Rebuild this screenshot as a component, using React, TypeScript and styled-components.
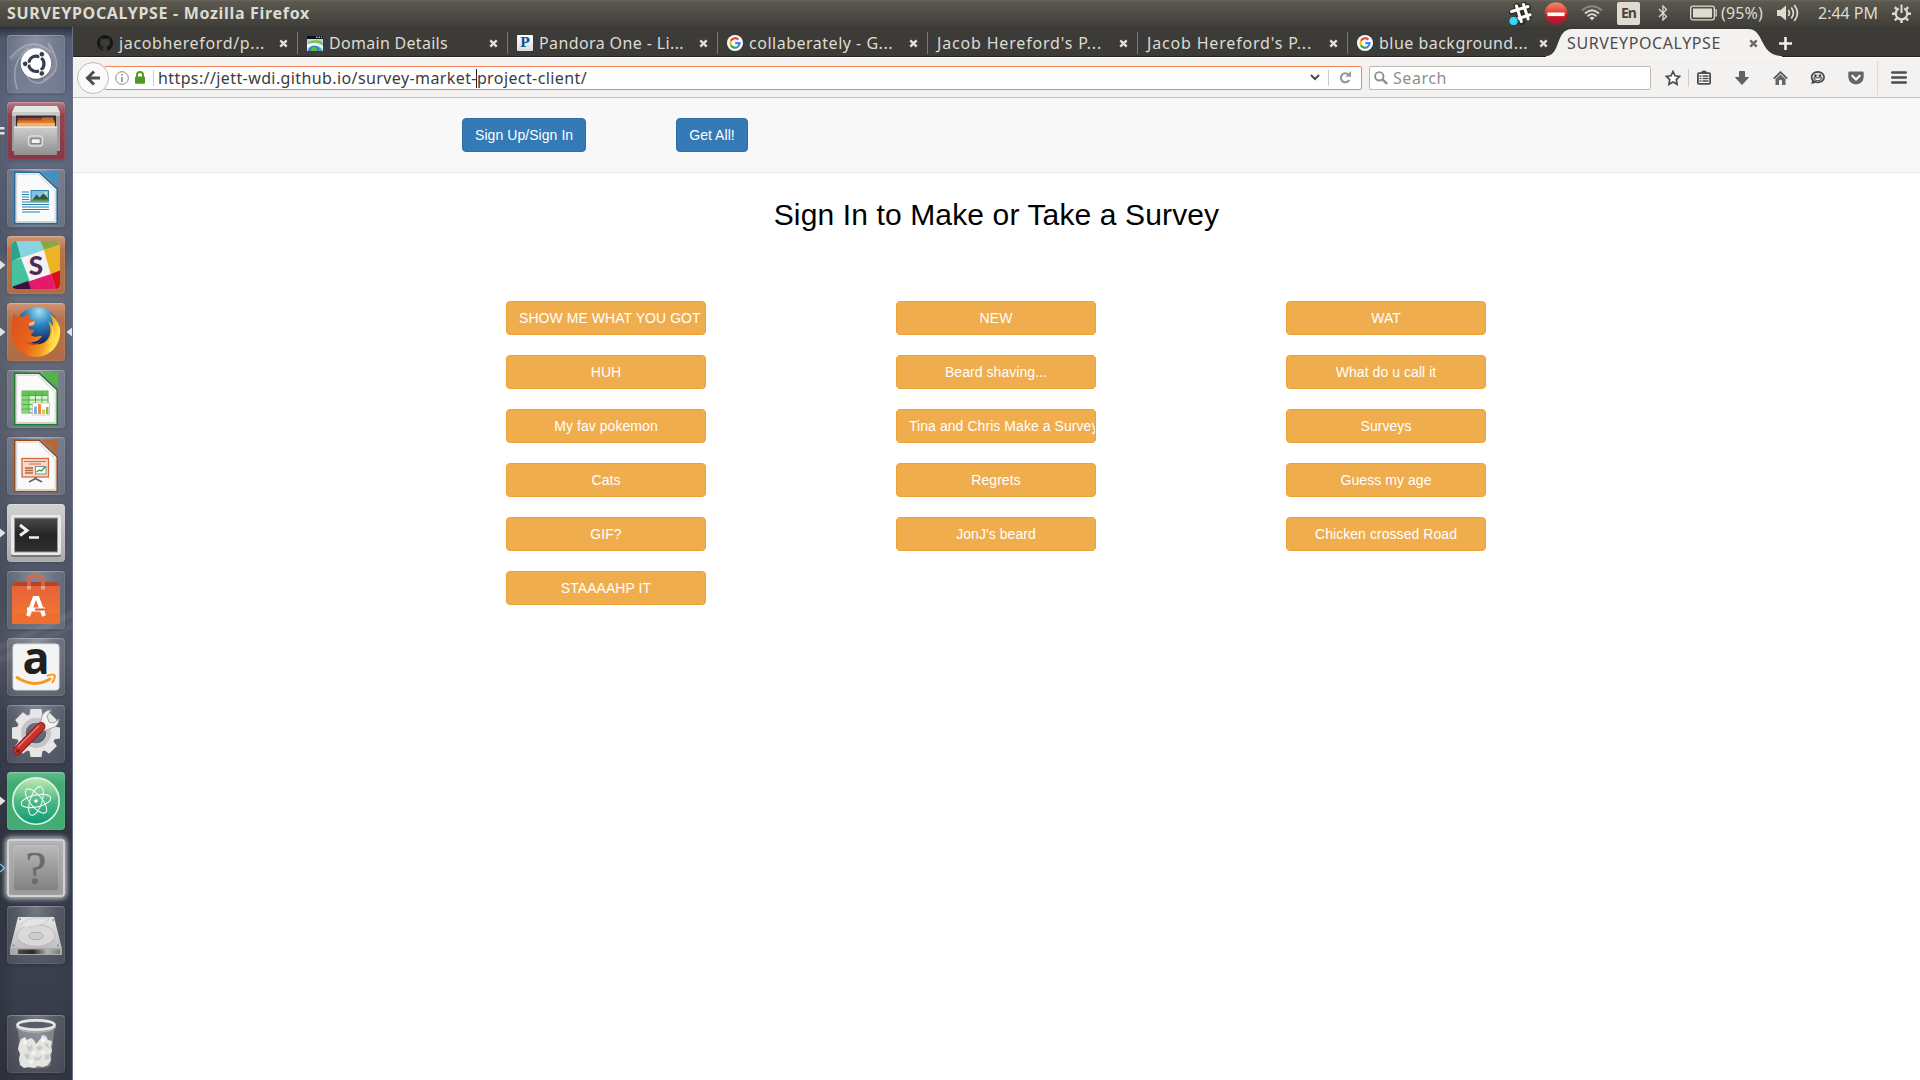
import React, { useLayoutEffect, useRef, useState } from "react";
import styled, { createGlobalStyle } from "styled-components";

const uiFont = '"Noto Sans", "Open Sans", sans-serif';
const pageFont = '"Liberation Sans", Arial, sans-serif';

const GlobalStyle = createGlobalStyle`
  *, *::before, *::after { box-sizing: border-box; }
  body { margin: 0; overflow: hidden; background: #fff; }
  button { font: inherit; margin: 0; }
  svg { display: block; flex: none; }
`;

const Desktop = styled.div`
  width: 1920px;
  height: 1080px;
  display: flex;
  flex-direction: column;
  overflow: hidden;
  background: #fff;
  font-family: ${uiFont};
`;

/* ---------- text that keeps to a given width ---------- */

const Label = styled.span<{ $size: number; $color: string; $bold?: boolean }>`
  flex: none;
  display: block;
  white-space: pre;
  line-height: 20px;
  font-size: ${(p) => p.$size}px;
  font-weight: ${(p) => (p.$bold ? 700 : 400)};
  color: ${(p) => p.$color};
`;

type FittedProps = { text: string; width: number; size?: number; color: string; bold?: boolean };

function Fitted({ text, width, size = 16, color, bold }: FittedProps) {
  const ref = useRef<HTMLSpanElement>(null);
  const [spacing, setSpacing] = useState(0);
  useLayoutEffect(() => {
    const el = ref.current;
    if (!el) return;
    const range = document.createRange();
    range.selectNodeContents(el);
    setSpacing((width - range.getBoundingClientRect().width) / text.length);
  }, [text, width]);
  return (
    <Label ref={ref} $size={size} $color={color} $bold={bold} style={{ letterSpacing: spacing, width }}>
      {text}
    </Label>
  );
}

/* ---------- top panel ---------- */

const Panel = styled.header`
  height: 27px;
  flex: none;
  display: flex;
  align-items: center;
  justify-content: space-between;
  padding: 0 9px 1px 7px;
  background: linear-gradient(#69675a 0, #5a584e 2px, #3f3e39 100%);
`;

const Tray = styled.div`
  display: flex;
  align-items: center;
  height: 100%;
`;

const TrayItem = styled.div<{ $w: number; $gap?: number }>`
  width: ${(p) => p.$w}px;
  margin-left: ${(p) => p.$gap ?? 0}px;
  display: flex;
  justify-content: center;
  align-items: center;
`;

const LanguageBadge = styled.div`
  width: 23px;
  height: 23px;
  border-radius: 2px;
  background: #dfdbd2;
  display: flex;
  align-items: center;
  justify-content: center;
`;

const tray = "#dfdbd2";

function SlackTrayIcon() {
  return (
    <svg width="24" height="25" viewBox="0 0 24 25">
      <g stroke="#262622" strokeWidth="6.400" strokeLinecap="round">
        <path d="M9 5l5 16M16 4l4 13M4 11l16-5M7 18l14-4.500" opacity=".75" />
      </g>
      <g stroke="#fff" strokeWidth="3" strokeLinecap="round">
        <path d="M8.500 5l4.800 15.500M15.500 3.500l4.600 14.500M3.500 10.500L20 5.500M7 18.500l15-4.700" />
      </g>
      <circle cx="5.500" cy="20" r="4.700" fill="#3ed2f3" stroke="#263b40" />
    </svg>
  );
}

function StopIcon() {
  return (
    <svg width="24" height="24" viewBox="0 0 24 24">
      <defs>
        <linearGradient id="stop" x1="0" y1="0" x2="0" y2="1">
          <stop offset="0" stopColor="#f28a74" />
          <stop offset=".5" stopColor="#df3a2b" />
          <stop offset=".55" stopColor="#cf1f22" />
          <stop offset="1" stopColor="#a3153a" />
        </linearGradient>
      </defs>
      <circle cx="12" cy="12.500" r="11.300" fill="url(#stop)" />
      <rect x="3.500" y="11.500" width="17" height="3.600" fill="#fff" />
    </svg>
  );
}

function WifiIcon() {
  return (
    <svg width="22" height="16" viewBox="0 0 22 16" fill="none" strokeWidth="1.800">
      <path d="M1 5.500Q11-3 21 5.500" stroke="#8d8a81" />
      <path d="M4 8.500Q11 2 18 8.500" stroke={tray} />
      <path d="M6.500 11.300Q11 7 15.500 11.300" stroke={tray} />
      <path d="M8.500 12.800Q11 10.800 13.500 12.800L11 15.500z" fill={tray} stroke="none" />
    </svg>
  );
}

function BluetoothIcon() {
  return (
    <svg width="10" height="18" viewBox="0 0 10 18" fill="none" stroke={tray} strokeWidth="1.300">
      <path d="M1 5l7.500 7.500L5 16V2l3.500 3.500L1 13" />
    </svg>
  );
}

function BatteryIcon() {
  return (
    <svg width="27" height="16" viewBox="0 0 27 16">
      <rect x=".7" y="1.200" width="23.600" height="13.600" rx="2" fill="none" stroke={tray} strokeWidth="1.300" />
      <rect x="3" y="3.500" width="19" height="9" fill={tray} />
      <path d="M24.500 5h1.700v6h-1.700" fill="none" stroke={tray} strokeWidth="1.200" />
    </svg>
  );
}

function SpeakerIcon() {
  return (
    <svg width="22" height="18" viewBox="0 0 22 18">
      <path d="M0 6h3.500L9 1.500v15L3.500 12H0z" fill={tray} />
      <g fill="none" stroke={tray} strokeWidth="1.700">
        <path d="M11.300 6q2.200 3 0 6M14.300 3.500q4.200 5.500 0 11M17.300 1q6.300 8 0 16" />
      </g>
    </svg>
  );
}

function SessionIcon() {
  return (
    <svg width="19" height="19" viewBox="0 0 19 19" fill="none" stroke={tray}>
      <path d="M6.700 4.500a5.800 5.800 0 1 0 5.600 0" strokeWidth="2.200" />
      <path d="M9.500 .5v8.500" strokeWidth="2" />
      <path
        d="M0 9.800h3.500M15.500 9.800h3.500M9.500 15.500v3.500M2.800 3.200l2.300 2.300M16.200 3.200l-2.300 2.300M2.800 16.500l2.300-2.300M16.200 16.500l-2.300-2.300"
        strokeWidth="2.400"
      />
    </svg>
  );
}

/* ---------- launcher ---------- */

const Workspace = styled.div`
  flex: 1;
  min-height: 0;
  display: flex;
`;

const Launcher = styled.nav`
  width: 73px;
  flex: none;
  display: flex;
  flex-direction: column;
  align-items: flex-start;
  gap: 9px;
  padding: 8px 0 7px 7px;
  border-right: 1px solid #687087;
  background:
    linear-gradient(#20232ecc 0, #20232e00 12px),
    linear-gradient(155deg, #0000 56%, #ffffff16 58%, #0000 60%, #ffffff10 62%, #0000 64%) 0 450px / 73px 260px no-repeat,
    linear-gradient(90deg, #00000022, #0000 25%, #0000 80%, #00000010),
    linear-gradient(#59627a 0, #667087 8%, #5a6175 21%, #696f7c 23%, #62687a 40%, #515769 53%, #5a5f6d 60%, #414757 66%, #343947 78%, #3a404e 90%, #343845 100%);
`;

type TileKind = "glass" | "red" | "orange" | "silver" | "green" | "unknown";

const tileFill: Record<TileKind, string> = {
  glass: "radial-gradient(ellipse at 50% 0, #ffffff50, #ffffff26 50%, #ffffff18)",
  red: "linear-gradient(#b87983 0, #96404f 22%, #883847)",
  orange: "linear-gradient(#cf9676 0, #b9734a 25%, #b06c45)",
  silver: "linear-gradient(#d2d2d2, #a9a9a9)",
  green: "linear-gradient(#63bd8d 0, #43aa73 20%, #42ad73)",
  unknown: "linear-gradient(#b5b5b5, #9b9b9b)",
};

const Tile = styled.div<{ $kind: TileKind; $last?: boolean }>`
  position: relative;
  width: 58px;
  height: 58px;
  flex: none;
  border-radius: 4px;
  margin-top: ${(p) => (p.$last ? "auto" : "0")};
  background: ${(p) => tileFill[p.$kind]};
  box-shadow: ${(p) =>
    p.$kind === "unknown"
      ? "inset 0 0 0 2px #d2d2d2, 0 0 5px 2px #ffffffaa"
      : "inset 0 0 0 1px #ffffff12, inset 0 1px 1px #ffffff38, 0 1px 5px #00000030"};
`;

const Pip = styled.svg<{ $right?: boolean }>`
  position: absolute;
  top: 22px;
  ${(p) => (p.$right ? "right: -7px;" : "left: -7px;")}
`;

function UbuntuGlyph() {
  return (
    <svg width="58" height="58" viewBox="0 0 58 58">
      <g fill="none" stroke="#fff" opacity=".3">
        <path d="M3 23Q24-2 45 18M41 8Q60 36 37 45M49 35Q30 60 17 37M10 54Q2 27 22 13" strokeWidth="1.500" />
        <path d="M3 25Q26 2 45 20M42 10Q55 36 35 43" strokeWidth="5" opacity=".35" />
      </g>
      <circle cx="29" cy="29.500" r="15.500" fill="#0003" />
      <circle cx="29" cy="28.500" r="15.200" fill="#fff" />
      <circle cx="29.300" cy="28.800" r="7.700" fill="none" stroke="#363e50" strokeWidth="3.200" strokeDasharray="14.120 2" strokeDashoffset="7" />
      <g fill="#363e50" stroke="#fff" strokeWidth="1">
        <circle cx="18.200" cy="28.800" r="2.800" />
        <circle cx="34.800" cy="19.200" r="2.800" />
        <circle cx="34.800" cy="38.400" r="2.800" />
      </g>
    </svg>
  );
}

function FilesGlyph() {
  return (
    <svg width="58" height="58" viewBox="0 0 58 58">
      <defs>
        <linearGradient id="cab" x1="0" y1="0" x2="0" y2="1">
          <stop offset="0" stopColor="#cfcfcf" />
          <stop offset="1" stopColor="#8f8f8f" />
        </linearGradient>
      </defs>
      <path d="M8 4h42l3 6v39H5V10z" fill="#9d9d9d" />
      <path d="M8 4h42l3 6.500H5z" fill="#e6e6e6" />
      <path d="M5 10h48v4H5z" fill="#c9c9c9" />
      <path d="M9 13.500h40V26H9z" fill="#35302f" />
      <path d="M11 16h36v9H11z" fill="#a8452a" />
      <path d="M35 15.500h11V19H35z" fill="#c96a2c" />
      <path d="M10.500 18.500h37V25h-37z" fill="#d97a33" />
      <path d="M10 21h38v4H10z" fill="#f0b268" />
      <path d="M7 24.500h43V53H7z" fill="url(#cab)" />
      <path d="M7 24.500h43V26H7z" fill="#e9e9e9" />
      <rect x="21.500" y="34" width="14" height="10" rx="3" fill="#a8a8a8" stroke="#dedede" strokeWidth="1.300" />
      <rect x="24.200" y="36.800" width="9" height="4.800" fill="#f4f4f4" stroke="#777" strokeWidth=".9" />
    </svg>
  );
}

function DocSheet({ line, fold, children }: { line: string; fold: string; children: React.ReactNode }) {
  return (
    <svg width="58" height="58" viewBox="0 0 58 58">
      <path d="M34 2.500h17V17z" fill={fold} />
      <path d="M7.700 3.200h24.500L50.200 20v34.500H7.700z" fill="#f6f6f6" stroke={line} strokeWidth="1.600" />
      <path d="M9.700 5.200h21L48.200 22v30.500H9.700z" fill="#fafafa" stroke="#d2d2d2" strokeWidth="1" />
      {children}
    </svg>
  );
}

function WriterGlyph() {
  return (
    <DocSheet line="#1a6d9f" fold="#3b92c6">
      <g stroke="#2681b4" strokeWidth="1.200">
        <path d="M15 23h7M15 25.500h7M15 28h7M15 30.500h7M15 33h27M15 35.500h27M15 38h27M15 40.500h27M15 43h18" />
      </g>
      <rect x="24" y="21.500" width="17.500" height="10.500" fill="#7fc4e8" stroke="#1a6d9f" strokeWidth=".8" />
      <path d="M25 31.500l4.500-6 3 3 4-4 4.700 5v2z" fill="#3d5238" />
      <circle cx="38.500" cy="24" r="1.200" fill="#ffe88a" />
      <path d="M25 30.500h16v1.200H25z" fill="#6aa33a" />
    </DocSheet>
  );
}

function CalcGlyph() {
  return (
    <DocSheet line="#188020" fold="#4cb93f">
      <rect x="15" y="21" width="26" height="22" fill="#d8f3cd" stroke="#4faf46" />
      <path d="M15 21h26v4.500H15z" fill="#63c356" />
      <path d="M15 25.500h7V43h-7z" fill="#8ed580" />
      <path d="M15 25.500h26M15 30h26M15 34.500h26M15 39h26M22 21v22M28.500 21v22M35 21v22" stroke="#4faf46" fill="none" />
      <rect x="25.500" y="33" width="17" height="12" fill="#fff" stroke="#bbb" strokeWidth=".7" />
      <path d="M27 36.500h3V44h-3z" fill="#7db4dd" />
      <path d="M31 34h3v10h-3z" fill="#f08a5c" />
      <path d="M35 39.500h3V44h-3z" fill="#f0c437" />
      <path d="M39 37h2.500v7H39z" fill="#7cc142" />
    </DocSheet>
  );
}

function ImpressGlyph() {
  return (
    <DocSheet line="#984a1a" fold="#b86636">
      <rect x="15" y="21.500" width="26.500" height="18.500" fill="#fbd9c6" stroke="#cf6b3f" strokeWidth="1.300" />
      <path d="M17 24.500h22M22 27h12" stroke="#cf6b3f" strokeWidth="1.200" />
      <path d="M18 31h8M18 33.500h8M18 36h8" stroke="#a86b4b" strokeWidth="1.400" />
      <rect x="28.500" y="29.500" width="10.500" height="7.500" fill="#fff" stroke="#888" />
      <path d="M29.500 35l3-2 2 1 3.500-4" stroke="#2a9b3c" fill="none" strokeWidth="1.300" />
      <path d="M28.500 40v2M22 45l6.500-3.500L35 45" stroke="#666" strokeWidth="1.800" fill="none" />
    </DocSheet>
  );
}

const SlackLetter = styled.span`
  position: absolute;
  left: 0;
  right: 0;
  top: 11px;
  text-align: center;
  font: 900 26px/36px Lato, ${uiFont};
  color: #4f2c55;
`;

function SlackGlyph() {
  return (
    <>
      <svg width="58" height="58" viewBox="0 0 58 58">
        <defs>
          <clipPath id="sl">
            <rect x="5" y="5" width="48" height="48" rx="4" />
          </clipPath>
        </defs>
        <g clipPath="url(#sl)">
          <path d="M0 0h58v58H0z" fill="#f3f1f2" />
          <path d="M0 0h11l5 20L4 26z" fill="#2aa58c" />
          <path d="M9 4h25l3 10-23 8z" fill="#87d4e0" />
          <path d="M33 4h20v5L37 14z" fill="#8aa745" />
          <path d="M37 14l17-6v27l-10 4z" fill="#ebb424" />
          <path d="M5 25l9-3 9 24-18 6z" fill="#45c39f" />
          <path d="M20 46l24-8 5 16H22z" fill="#e6186d" />
          <path d="M44 38l10-4v20h-5z" fill="#d4121a" />
          <path d="M4 51l17-6 3 9H4z" fill="#40103d" />
        </g>
      </svg>
      <SlackLetter>S</SlackLetter>
    </>
  );
}

function FirefoxGlyph() {
  return (
    <svg width="58" height="58" viewBox="0 0 58 58">
      <defs>
        <radialGradient id="globe" cx=".55" cy=".1" r=".9">
          <stop offset="0" stopColor="#9fe0f2" />
          <stop offset=".35" stopColor="#2e86c2" />
          <stop offset=".8" stopColor="#12285e" />
        </radialGradient>
        <linearGradient id="fox" x1="0" y1="0" x2="1" y2=".3">
          <stop offset="0" stopColor="#dd4f1e" />
          <stop offset=".5" stopColor="#e8641c" />
          <stop offset=".8" stopColor="#f39a1f" />
          <stop offset="1" stopColor="#ffe04a" />
        </linearGradient>
      </defs>
      <circle cx="30" cy="25.500" r="21.500" fill="url(#globe)" />
      <path
        d="M7 9c0 3 1 4 3 5 2-1 5-1 7 0 3-3 5-4 8-4-3 2-4 4-3 6l6 2c0 2-2 3-5 4-2 1-1 3-1 4 2 1 4 0 5 2-1 2-3 2-3 4 3 3 7 1 11 1-3 5-8 7-12 6 6 4 15 3 19-5 3-6 1-12-1-16 3 1 4 4 5 5 0-6-2-10-5-13 8 4 12 11 12 20 0 13-11 24-24 24S4.500 43 4.500 30c0-8 1-15 2.500-21z"
        fill="url(#fox)"
      />
      <path d="M48 15c7 12 4 28-8 34 12-4 15-21 8-34M44 22c3 8 1 16-5 20 8-3 10-12 5-20M50 19q4 9 1 18 5-9-1-18" fill="#ffe34f" />
      <path d="M22 20l6-2-1 4-5 1z" fill="#f6b59a" />
      <path d="M18 37c4 5 12 5 17 0-4 6-13 7-17 0z" fill="#c53a17" />
    </svg>
  );
}

function TerminalGlyph() {
  return (
    <svg width="58" height="58" viewBox="0 0 58 58">
      <defs>
        <linearGradient id="scr" x1="0" y1="0" x2="0" y2="1">
          <stop offset="0" stopColor="#4a4a4a" />
          <stop offset=".5" stopColor="#252525" />
          <stop offset="1" stopColor="#2e2e2e" />
        </linearGradient>
      </defs>
      <rect x="4" y="12" width="50" height="41" rx="2" fill="#777" />
      <rect x="4" y="11" width="50" height="40" rx="2" fill="#e9e9e9" />
      <rect x="7.500" y="14" width="43" height="34" fill="url(#scr)" stroke="#999" />
      <path d="M13 21l7 5.500L13 31.500" fill="none" stroke="#f0f0f0" strokeWidth="3" />
      <path d="M22 33.500h10" stroke="#f0f0f0" strokeWidth="2.500" />
    </svg>
  );
}

function SoftwareGlyph() {
  return (
    <svg width="58" height="58" viewBox="0 0 58 58">
      <defs>
        <linearGradient id="bag" x1="0" y1="0" x2="0" y2="1">
          <stop offset="0" stopColor="#e5633a" />
          <stop offset="1" stopColor="#f37a34" />
        </linearGradient>
      </defs>
      <path d="M8 11h42l3 6H5z" fill="#b64527" />
      <path d="M5 15h48v38H5z" fill="url(#bag)" />
      <path d="M5 43h48v10H5z" fill="#e9662a" opacity=".5" />
      <path d="M22 18V8q0-3 3-3h8q3 0 3 3v10" fill="none" stroke="#d56a4b" strokeWidth="3" />
      <path d="M20 15h4v3.500h-4zM34 15h4v3.500h-4z" fill="#efa388" />
      <path d="M21 45l6.500-18h3L37 45M20 38.500h18" fill="none" stroke="#fff" strokeWidth="4" />
      <path d="M28 37.500h10v2H28z" fill="#e25523" />
    </svg>
  );
}

const AmazonLetter = styled.span`
  position: absolute;
  left: 0;
  right: 0;
  top: -3px;
  text-align: center;
  font: 700 45px/44px "Open Sans", ${uiFont};
  color: #202020;
`;

function AmazonGlyph() {
  return (
    <>
      <svg width="58" height="58" viewBox="0 0 58 58">
        <rect x="6" y="6" width="46" height="46" rx="3" fill="#f5f5f5" stroke="#ddd" />
        <path d="M10 39.500q17 11 33 1.500" fill="none" stroke="#f7991c" strokeWidth="3" strokeLinecap="round" />
        <path d="M40 38q7-3 8 0 0 3-3 7" fill="none" stroke="#f7991c" strokeWidth="2" />
      </svg>
      <AmazonLetter>a</AmazonLetter>
    </>
  );
}

function SettingsGlyph() {
  const teeth = [0, 45, 90, 135, 180, 225, 270, 315];
  return (
    <svg width="58" height="58" viewBox="0 0 58 58">
      <g fill="#e6e6e6">
        {teeth.map((a) => (
          <path key={a} d="M23.500 4h11l1.500 10H22z" transform={`rotate(${a} 29 28)`} />
        ))}
      </g>
      <circle cx="29" cy="28" r="15" fill="none" stroke="#e6e6e6" strokeWidth="9" />
      <circle cx="29" cy="28" r="13" fill="none" stroke="#c4c4c4" strokeWidth="4" />
      <path d="M33 22l2-11q3-6 9-6l-4 6 2 6 5 1 5-4q-1 8-7 9l-8 3z" fill="#f2f2f2" stroke="#a2a2a2" />
      <path d="M10.500 45.500L34 21.500" stroke="#8f1a1a" strokeWidth="9" strokeLinecap="round" />
      <path d="M10.500 45.500L34 21.500" stroke="#c8322e" strokeWidth="7" strokeLinecap="round" />
      <path d="M11 42l21-21.500" stroke="#ea7a72" strokeWidth="1.500" />
      <circle cx="11" cy="46" r="2" fill="#8c1717" />
    </svg>
  );
}

function AtomGlyph() {
  return (
    <svg width="58" height="58" viewBox="0 0 58 58">
      <defs>
        <linearGradient id="atom" x1="0" y1="0" x2="0" y2="1">
          <stop offset="0" stopColor="#c3ecb0" />
          <stop offset=".5" stopColor="#4fb887" />
          <stop offset="1" stopColor="#0a9c74" />
        </linearGradient>
      </defs>
      <circle cx="29" cy="29" r="23.200" fill="url(#atom)" stroke="#e3f4ea" strokeWidth="1.600" />
      <g fill="none" stroke="#e8f8ef" strokeWidth="1.100">
        <ellipse cx="29" cy="29" rx="15" ry="6" transform="rotate(-12 29 29)" />
        <ellipse cx="29" cy="29" rx="15" ry="6" transform="rotate(50 29 29)" />
        <ellipse cx="29" cy="29" rx="15" ry="6" transform="rotate(108 29 29)" />
      </g>
      <circle cx="29" cy="29" r="1.800" fill="#fff" />
    </svg>
  );
}

const Question = styled.span`
  position: absolute;
  left: 6px;
  top: 6px;
  width: 46px;
  height: 46px;
  border-radius: 3px;
  text-align: center;
  font: 400 47px/46px "Liberation Serif", serif;
  color: #6a6a6a;
  -webkit-text-stroke: 0.4px #6a6a6a;
  background: linear-gradient(#b9b9b9, #808080);
  box-shadow: inset 0 0 0 1px #d0d0d066, 0 0 1px #555;
`;

function DiskGlyph() {
  return (
    <svg width="58" height="58" viewBox="0 0 58 58">
      <defs>
        <linearGradient id="disk" x1="0" y1="0" x2="0" y2="1">
          <stop offset="0" stopColor="#e6e6e6" />
          <stop offset="1" stopColor="#bdbdbd" />
        </linearGradient>
        <linearGradient id="diskEdge">
          <stop offset="0" stopColor="#4a4a4a" />
          <stop offset=".35" stopColor="#2a2a2a" />
          <stop offset=".7" stopColor="#b5b5b5" />
          <stop offset="1" stopColor="#777" />
        </linearGradient>
      </defs>
      <path d="M11 11h36l8 32H3z" fill="url(#disk)" />
      <path d="M3 42h52v6q0 1-1 1H4q-1 0-1-1z" fill="#aaa" />
      <path d="M11 43.500h42v4.500H11z" fill="url(#diskEdge)" />
      <ellipse cx="29" cy="29.500" rx="19" ry="11" fill="#d9d9d9" stroke="#b0b0b0" strokeWidth=".8" />
      <ellipse cx="29" cy="30" rx="7" ry="3.700" fill="#cecece" stroke="#a0a0a0" strokeWidth=".8" />
      <path d="M13 21q5-9 16-9h14q-8 9-22 9" fill="#e4e4e4" stroke="#c0c0c0" strokeWidth=".7" />
      <g fill="#888">
        <circle cx="13" cy="13" r="1" />
        <circle cx="46" cy="14" r="1" />
        <circle cx="6.500" cy="39.500" r="1" />
        <circle cx="51" cy="39.500" r="1" />
      </g>
    </svg>
  );
}

function TrashGlyph() {
  return (
    <svg width="58" height="58" viewBox="0 0 58 58">
      <path d="M10.500 13h37l-4 38q-14 5-28 0z" fill="#fff" opacity=".25" />
      <g fill="#e4e4e1">
        <path d="M14 24l4-2 2 3 4-2 3 2 2 4 5-6 1-3 4 1 2 4 4 1-1 6 1 4-2 4 1 5-3 5-5 2-5-1-4 2-5-1-5 1-4-3-1-6 1-5-2-5 1-5z" />
      </g>
      <g fill="#c9c9c6">
        <path d="M19 30l4 2 2-3 1 5-4 3zM29 33l4-3 3 3-4 3zM38 27l3 2 2 5-5-3zM17 40l4-2 2 4-3 3zM27 41l4 2 4-3-2 5-5 1zM38 40l4-1 0 5-4 1z" />
      </g>
      <g fill="#f6f6f4">
        <path d="M17 25l3 1-1 4-3-1zM35 23l4 1-2 3-3 0zM26 36l3 1-2 3-2-1zM34 36l4 0-1 3-3 0zM22 46l4-1 0 3-3 1z" />
      </g>
      <ellipse cx="29" cy="10" rx="18.500" ry="4.700" fill="#595e6a" stroke="#e6e6e3" strokeWidth="2.800" />
      <path d="M9.300 11.500q3 5.500 19.700 5.500t19.700-5.500" fill="none" stroke="#b4b4b0" strokeWidth="1.500" />
    </svg>
  );
}

type App = { id: string; kind: TileKind; glyph: React.ReactNode; mark?: "one" | "two" | "hollow"; active?: boolean };

const apps: App[] = [
  { id: "dash", kind: "glass", glyph: <UbuntuGlyph /> },
  { id: "files", kind: "red", glyph: <FilesGlyph />, mark: "two" },
  { id: "writer", kind: "glass", glyph: <WriterGlyph /> },
  { id: "slack", kind: "orange", glyph: <SlackGlyph />, mark: "one" },
  { id: "firefox", kind: "orange", glyph: <FirefoxGlyph />, mark: "one", active: true },
  { id: "calc", kind: "glass", glyph: <CalcGlyph /> },
  { id: "impress", kind: "glass", glyph: <ImpressGlyph /> },
  { id: "terminal", kind: "silver", glyph: <TerminalGlyph />, mark: "one" },
  { id: "software", kind: "glass", glyph: <SoftwareGlyph /> },
  { id: "amazon", kind: "glass", glyph: <AmazonGlyph /> },
  { id: "settings", kind: "glass", glyph: <SettingsGlyph /> },
  { id: "atom", kind: "green", glyph: <AtomGlyph />, mark: "one" },
  { id: "unknown", kind: "unknown", glyph: <Question>?</Question>, mark: "hollow" },
  { id: "disk", kind: "glass", glyph: <DiskGlyph /> },
];

function Mark({ type }: { type: "one" | "two" | "hollow" }) {
  return (
    <Pip width="6" height="14" viewBox="0 0 6 14">
      {type === "one" && <path d="M0 2.500L5.500 7 0 11.500z" fill="#e2e2e2" />}
      {type === "two" && <path d="M0 3h4l1 1-1 1.500H0zM0 8h4l1 1.200L4 10.500H0z" fill="#e2e2e2" />}
      {type === "hollow" && <path d="M0 3l4.500 4L0 11" fill="none" stroke="#7ecbe8" strokeWidth="1.300" />}
    </Pip>
  );
}

/* ---------- browser chrome ---------- */

const Browser = styled.main`
  flex: 1;
  min-width: 0;
  display: flex;
  flex-direction: column;
`;

const TabStrip = styled.div`
  height: 30px;
  flex: none;
  display: flex;
  padding-left: 14px;
  background: #3c3b37;
  border-bottom: 1px solid #242320;
`;

const Tab = styled.div<{ $divider?: boolean }>`
  position: relative;
  width: 210px;
  height: 30px;
  flex: none;
  display: flex;
  align-items: center;
  gap: 6px;
  padding: 2px 9px 0 10px;
  background: ${(p) => (p.$divider ? "linear-gradient(#7c7a74, #7c7a74) 0 5px / 1px 22px no-repeat" : "none")};
`;

const TabIcon = styled.div`
  width: 16px;
  height: 16px;
  flex: none;
`;

const TabShape = styled.svg`
  position: absolute;
  left: -11px;
  top: 0;
`;

const TabTitle = styled.div`
  position: relative;
  flex: 1;
`;

const CloseGlyph = styled.svg`
  position: relative;
`;

const NewTab = styled.div`
  width: 13px;
  margin: 10px 0 0 12px;
`;

function GoogleIcon() {
  return (
    <svg width="16" height="16" viewBox="0 0 16 16">
      <circle cx="8" cy="8" r="8" fill="#fff" />
      <g fill="none" strokeWidth="2.200">
        <path d="M11.400 4.600A4.700 4.700 0 0 0 3.900 5.800" stroke="#ea4335" />
        <path d="M3.900 5.800a4.700 4.700 0 0 0 0 4.400" stroke="#fbbc05" />
        <path d="M3.900 10.200a4.700 4.700 0 0 0 7.300 1.300" stroke="#34a853" />
        <path d="M11.200 11.500A4.700 4.700 0 0 0 12.600 8.200H8.200" stroke="#4285f4" />
      </g>
    </svg>
  );
}

function GithubIcon() {
  return (
    <svg width="16" height="16" viewBox="0 0 16 16">
      <path
        fill="#171615"
        d="M8 0C3.580 0 0 3.580 0 8c0 3.540 2.290 6.530 5.470 7.590.4.070.55-.17.55-.38 0-.19-.01-.82-.01-1.490-2.010.37-2.530-.49-2.690-.94-.09-.23-.48-.94-.82-1.130-.28-.15-.68-.52-.01-.53.63-.01 1.080.58 1.230.82.72 1.210 1.870.87 2.330.66.07-.52.28-.87.51-1.070-1.780-.2-3.640-.89-3.640-3.950 0-.87.31-1.590.82-2.150-.08-.2-.36-1.020.08-2.120 0 0 .67-.21 2.200.82.64-.18 1.320-.27 2-.27s1.360.09 2 .27c1.530-1.040 2.200-.82 2.200-.82.44 1.100.16 1.920.08 2.120.51.56.82 1.270.82 2.150 0 3.070-1.870 3.750-3.650 3.950.29.25.54.73.54 1.480 0 1.070-.01 1.930-.01 2.200 0 .21.15.46.55.38A8.010 8.010 0 0 0 16 8c0-4.420-3.580-8-8-8z"
      />
    </svg>
  );
}

function DomainIcon() {
  return (
    <svg width="16" height="16" viewBox="0 0 16 16">
      <path d="M0 1h16v3H0z" fill="#111" />
      <path d="M9 1.800h1.500v1H9zM11.500 1.800H13v1h-1.500zM14 1.800h1v1h-1z" fill="#fff" />
      <path d="M0 4h16v12H0z" fill="#a9dcf2" />
      <path d="M2 7q5-3 12-1l2 3v1Q9 5 0 10z" fill="#79c23c" />
      <path d="M0 9.500q7-4 16 2v2Q9 8 0 13z" fill="#fff" />
      <path d="M1 16q1-5 6-5.500 6 .5 8 5.500z" fill="#2a86d0" />
      <path d="M4 16q0-4 3.500-4.500l3 2.500L9 16zM12 13l2 3h-2z" fill="#69b92e" />
    </svg>
  );
}

const PandoraIcon = styled.div`
  width: 16px;
  height: 16px;
  background: linear-gradient(#fff, #d8dce0);
  border-radius: 1px;
  text-align: center;
  font: 700 13px/16px "DejaVu Serif", serif;
  color: #0c5790;
`;

function CloseIcon({ color }: { color: string }) {
  return (
    <CloseGlyph width="9" height="9" viewBox="0 0 9 9">
      <path d="M1.300 1.300l6.400 6.400M7.700 1.300L1.300 7.700" stroke={color} strokeWidth="2.400" />
    </CloseGlyph>
  );
}

const tabs = [
  { title: "jacobhereford/p...", width: 146, icon: <GithubIcon /> },
  { title: "Domain Details", width: 119, icon: <DomainIcon /> },
  { title: "Pandora One - Li...", width: 145, icon: <PandoraIcon>P</PandoraIcon> },
  { title: "collaberately - G...", width: 144, icon: <GoogleIcon /> },
  { title: "Jacob Hereford's P...", width: 165 },
  { title: "Jacob Hereford's P...", width: 165 },
  { title: "blue background...", width: 149, icon: <GoogleIcon /> },
];

const Toolbar = styled.div`
  height: 41px;
  flex: none;
  display: flex;
  align-items: center;
  padding-left: 4px;
  background: #f4f2f1;
  border-top: 1px solid #fbfafa;
  border-bottom: 1px solid #c2c1c1;
`;

const BackButton = styled.div`
  position: relative;
  z-index: 1;
  width: 32px;
  height: 32px;
  margin-right: -5px;
  border: 1px solid #bfbcb9;
  border-radius: 50%;
  background: #fbfafa;
  display: flex;
  align-items: center;
  justify-content: center;
`;

const UrlField = styled.div`
  width: 1258px;
  height: 24px;
  display: flex;
  align-items: center;
  background: #fff;
  border: 1px solid #f0845a;
  border-radius: 2px;
  padding-left: 10px;
`;

const SearchField = styled.div`
  width: 282px;
  height: 24px;
  margin-left: 7px;
  display: flex;
  align-items: center;
  gap: 5px;
  background: #fff;
  border: 1px solid #bcb9b6;
  border-radius: 2px;
  padding-left: 4px;
`;

const Rule = styled.span<{ $h: number; $l?: number; $r?: number; $c?: string }>`
  width: 1px;
  height: ${(p) => p.$h}px;
  margin: 0 ${(p) => p.$r ?? 0}px 0 ${(p) => p.$l ?? 0}px;
  background: ${(p) => p.$c ?? "#cfcdcb"};
`;

const Spacer = styled.span<{ $w?: number }>`
  ${(p) => (p.$w ? `width: ${p.$w}px;` : "flex: 1;")}
`;

const Address = styled.div`
  position: relative;
  &::after {
    content: "";
    position: absolute;
    left: 318px;
    top: 1px;
    width: 1px;
    height: 19px;
    background: #222;
  }
`;

const ink = "#4c4c4c";

function BackIcon() {
  return (
    <svg width="16" height="16" viewBox="0 0 16 16" fill="none" stroke={ink} strokeWidth="3">
      <path d="M9 1.500L2.500 8 9 14.500M3 8h12" />
    </svg>
  );
}

function InfoIcon() {
  return (
    <svg width="14" height="14" viewBox="0 0 14 14">
      <circle cx="7" cy="7" r="6.300" fill="none" stroke="#8b8b8b" />
      <path d="M6.200 3h1.600v1.600H6.200zM6.200 6h1.600v5H6.200z" fill="#8b8b8b" />
    </svg>
  );
}

function LockIcon() {
  return (
    <svg width="10" height="13" viewBox="0 0 10 13">
      <path d="M2 6V4a3 3 0 0 1 6 0v2" fill="none" stroke="#4e9a23" strokeWidth="2" />
      <rect x="0" y="5.500" width="10" height="7.200" rx="1" fill="#4e9a23" />
    </svg>
  );
}

function ChevronIcon() {
  return (
    <svg width="10" height="7" viewBox="0 0 10 7" fill="none" stroke={ink} strokeWidth="2">
      <path d="M1 1l4 4 4-4" />
    </svg>
  );
}

function ReloadIcon() {
  return (
    <svg width="13" height="13" viewBox="0 0 13 13">
      <path d="M9.500 3.500A4.500 4.500 0 1 0 10.300 9" fill="none" stroke="#8d99a5" strokeWidth="2.200" />
      <path d="M12 0v5.700H6.300z" fill="#8d99a5" />
    </svg>
  );
}

function SearchIcon() {
  return (
    <svg width="14" height="14" viewBox="0 0 14 14" fill="none" stroke="#8f8f8f">
      <circle cx="5.300" cy="5.300" r="4.200" strokeWidth="1.900" />
      <path d="M8.500 8.500l4.700 4.300" strokeWidth="2.400" />
    </svg>
  );
}

function StarIcon() {
  return (
    <svg width="16" height="16" viewBox="0 0 16 16">
      <path d="M8 1.500l2 4.300 4.700.6-3.400 3.200.8 4.700L8 12l-4.100 2.300.8-4.700L1.300 6.400 6 5.800z" fill="#fff" stroke={ink} strokeWidth="1.700" />
    </svg>
  );
}

function ListIcon() {
  return (
    <svg width="14" height="15" viewBox="0 0 14 15">
      <rect x=".9" y="3.200" width="12.200" height="10.600" rx="1" fill="#fff" stroke={ink} strokeWidth="1.800" />
      <path d="M4 3q0-2.600 3-2.600T10 3z" fill={ink} />
      <path d="M2.500 6h2M2.500 8.500h2M2.500 11h2M5.500 6h6M5.500 8.500h6M5.500 11h6" stroke={ink} strokeWidth="1.300" />
    </svg>
  );
}

function DownloadIcon() {
  return (
    <svg width="14" height="14" viewBox="0 0 14 14">
      <path d="M4.500 .5h5v6H13.500L7 13.500 .500 6.500h4z" fill="#626262" stroke="#4a4a4a" strokeWidth=".8" />
    </svg>
  );
}

function HomeIcon() {
  return (
    <svg width="15" height="14" viewBox="0 0 15 14">
      <path d="M.8 7.600L7.500 1.200l6.700 6.400" fill="none" stroke="#555" strokeWidth="1.800" />
      <path d="M2.500 8l5-4.500 5 4.500v6H9V9.500q-1.500-1.500-3 0V14H2.500z" fill="#666" />
    </svg>
  );
}

function ChatIcon() {
  return (
    <svg width="15" height="14" viewBox="0 0 15 14">
      <ellipse cx="7.800" cy="6.200" rx="6.300" ry="5.300" fill="#d9d8d7" stroke="#444" strokeWidth="1.600" />
      <path d="M2.300 9.500L1.200 13.200 6 11.500z" fill="#444" />
      <circle cx="5.500" cy="4.700" r="1.200" fill="#333" />
      <circle cx="10" cy="4.700" r="1.200" fill="#333" />
      <path d="M3.600 6.900h8.400q-.8 2.900-4.200 2.900T3.600 6.900z" fill="#fff" stroke="#444" strokeWidth="1" />
    </svg>
  );
}

function PocketIcon() {
  return (
    <svg width="16" height="14" viewBox="0 0 16 14">
      <path d="M1.500 .5h13q1.200 0 1.200 1.200V6q-.5 7-7.700 7.500Q.8 13 .3 6V1.700Q.3.500 1.500.500z" fill="#666" />
      <path d="M4.300 4.800L8 8.500l3.700-3.700" fill="none" stroke="#fff" strokeWidth="2" strokeLinecap="round" />
    </svg>
  );
}

function MenuIcon() {
  return (
    <svg width="16" height="13" viewBox="0 0 16 13" stroke={ink} strokeWidth="2.600" strokeLinecap="round">
      <path d="M1.300 1.500h13.400M1.300 6.500h13.400M1.300 11.500h13.400" />
    </svg>
  );
}

const Tool = styled.div<{ $gap: number; $w: number }>`
  width: ${(p) => p.$w}px;
  margin-left: ${(p) => p.$gap}px;
  display: flex;
  justify-content: center;
`;

/* ---------- page ---------- */

const Page = styled.div`
  flex: 1;
  font-family: ${pageFont};
  font-size: 14px;
  line-height: 20px;
  background: #fff;
`;

const NavBar = styled.div`
  height: 75px;
  display: flex;
  gap: 90px;
  align-items: flex-start;
  padding: 20px 0 0 389px;
  background: #f8f8f8;
  border-bottom: 1px solid #e7e7e7;
`;

const Button = styled.button<{ $tone: "primary" | "warning"; $w: number }>`
  width: ${(p) => p.$w}px;
  height: 34px;
  padding: 6px 12px;
  overflow: hidden;
  display: flex;
  justify-content: safe center;
  white-space: nowrap;
  letter-spacing: 0.06px;
  color: #fff;
  border-radius: 4px;
  border: 1px solid ${(p) => (p.$tone === "primary" ? "#2e6da4" : "#eea236")};
  background: ${(p) => (p.$tone === "primary" ? "#337ab7" : "#f0ad4e")};
`;

const Heading = styled.h1`
  margin: 25px 0 0;
  text-align: center;
  font-size: 30px;
  font-weight: 400;
  line-height: 33px;
  letter-spacing: 0.13px;
  color: #000;
`;

const SurveyGrid = styled.div`
  display: grid;
  grid-template-columns: repeat(3, 200px);
  column-gap: 190px;
  row-gap: 20px;
  margin: 70px 0 0 433px;
`;

const surveys = [
  "SHOW ME WHAT YOU GOT", "NEW", "WAT",
  "HUH", "Beard shaving...", "What do u call it",
  "My fav pokemon", "Tina and Chris Make a Survey", "Surveys",
  "Cats", "Regrets", "Guess my age",
  "GIF?", "JonJ's beard", "Chicken crossed Road",
  "STAAAAHP IT",
];

export default function App() {
  return (
    <Desktop>
      <GlobalStyle />
      <Panel>
        <Fitted text="SURVEYPOCALYPSE - Mozilla Firefox" width={303} color="#dfdbd2" bold />
        <Tray>
          <TrayItem $w={24}><SlackTrayIcon /></TrayItem>
          <TrayItem $w={24} $gap={12}><StopIcon /></TrayItem>
          <TrayItem $w={22} $gap={13}><WifiIcon /></TrayItem>
          <TrayItem $w={23} $gap={14}>
            <LanguageBadge><Fitted text="En" width={15} size={14} color="#45443e" bold /></LanguageBadge>
          </TrayItem>
          <TrayItem $w={10} $gap={18}><BluetoothIcon /></TrayItem>
          <TrayItem $w={27} $gap={22}><BatteryIcon /></TrayItem>
          <TrayItem $w={42} $gap={4}><Fitted text="(95%)" width={42} color={tray} /></TrayItem>
          <TrayItem $w={22} $gap={14}><SpeakerIcon /></TrayItem>
          <TrayItem $w={60} $gap={19}><Fitted text="2:44 PM" width={60} color={tray} /></TrayItem>
          <TrayItem $w={19} $gap={14}><SessionIcon /></TrayItem>
        </Tray>
      </Panel>
      <Workspace>
        <Launcher>
          {apps.map((a) => (
            <Tile key={a.id} $kind={a.kind}>
              {a.glyph}
              {a.mark && <Mark type={a.mark} />}
              {a.active && (
                <Pip $right width="6" height="14" viewBox="0 0 6 14">
                  <path d="M6 2.500L.5 7 6 11.500z" fill="#e2e2e2" />
                </Pip>
              )}
            </Tile>
          ))}
          <Tile $kind="glass" $last><TrashGlyph /></Tile>
        </Launcher>
        <Browser>
          <TabStrip>
            {tabs.map((t, i) => (
              <Tab key={i} $divider={i > 0}>
                {t.icon && <TabIcon>{t.icon}</TabIcon>}
                <TabTitle><Fitted text={t.title} width={t.width} color="#dedbd3" /></TabTitle>
                <CloseIcon color="#e3e0d8" />
              </Tab>
            ))}
            <Tab>
              <TabShape width="238" height="30" viewBox="0 0 238 30">
                <path d="M0 30v-1C15 29 9 2 26 2H202C219 2 213 29 236 29v1z" fill="#f4f2f1" />
              </TabShape>
              <TabTitle><Fitted text="SURVEYPOCALYPSE" width={154} color="#4c4c4c" /></TabTitle>
              <CloseIcon color="#6b6965" />
            </Tab>
            <NewTab>
              <svg width="13" height="13" viewBox="0 0 13 13">
                <path d="M6.500 0v13M0 6.500h13" stroke="#f2f0ec" strokeWidth="2.600" />
              </svg>
            </NewTab>
          </TabStrip>
          <Toolbar>
            <BackButton><BackIcon /></BackButton>
            <UrlField>
              <InfoIcon />
              <Spacer $w={6} />
              <LockIcon />
              <Rule $h={16} $l={8} $r={4} />
              <Address>
                <Fitted text="https://jett-wdi.github.io/survey-market-project-client/" width={429} color="#3c3c3c" />
              </Address>
              <Spacer />
              <ChevronIcon />
              <Rule $h={16} $l={8} $r={10} />
              <ReloadIcon />
              <Spacer $w={9} />
            </UrlField>
            <SearchField>
              <SearchIcon />
              <Fitted text="Search" width={54} color="#8f8f8f" />
            </SearchField>
            <Tool $gap={14} $w={16}><StarIcon /></Tool>
            <Rule $h={18} $l={7} $r={8} />
            <Tool $gap={0} $w={14}><ListIcon /></Tool>
            <Tool $gap={24} $w={14}><DownloadIcon /></Tool>
            <Tool $gap={24} $w={15}><HomeIcon /></Tool>
            <Tool $gap={22} $w={15}><ChatIcon /></Tool>
            <Tool $gap={23} $w={16}><PocketIcon /></Tool>
            <Rule $h={34} $l={13} $r={0} $c="#dcdad8" />
            <Tool $gap={13} $w={16}><MenuIcon /></Tool>
          </Toolbar>
          <Page>
            <NavBar>
              <Button $tone="primary" $w={124}>Sign Up/Sign In</Button>
              <Button $tone="primary" $w={72}>Get All!</Button>
            </NavBar>
            <Heading>Sign In to Make or Take a Survey</Heading>
            <SurveyGrid>
              {surveys.map((s) => (
                <Button key={s} $tone="warning" $w={200}>{s}</Button>
              ))}
            </SurveyGrid>
          </Page>
        </Browser>
      </Workspace>
    </Desktop>
  );
}
